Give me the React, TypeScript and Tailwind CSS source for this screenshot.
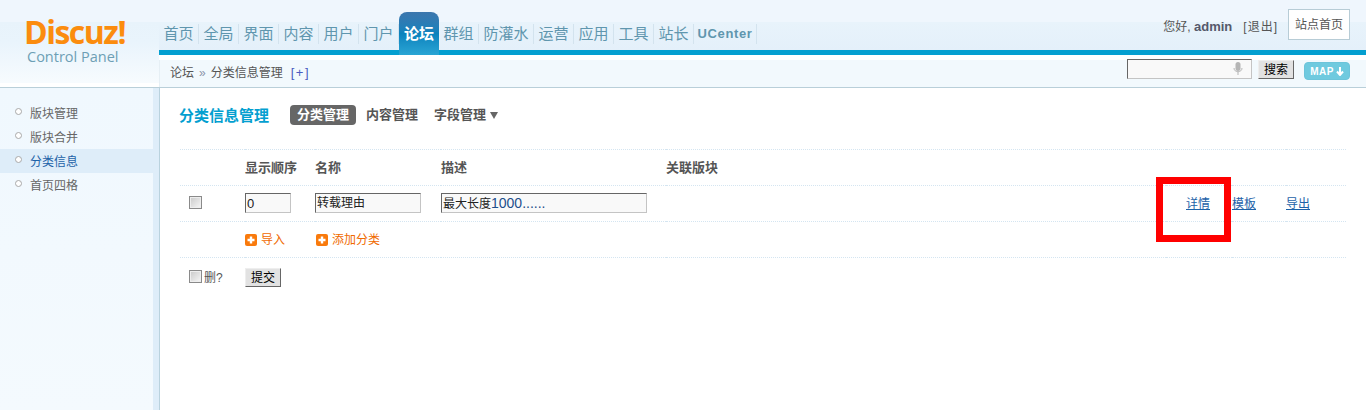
const cjk = "font-['Liberation_Sans','Noto_Sans_CJK_SC',sans-serif]"

const navItems = ["首页", "全局", "界面", "内容", "用户", "门户", "论坛", "群组", "防灌水", "运营", "应用", "工具", "站长", "UCenter"]
const sideItems = ["版块管理", "版块合并", "分类信息", "首页四格"]

const Checkbox = () => (
  <span className="-mt-0.5 -ml-px block h-[13px] w-[13px] border border-[#8a8a8a] bg-gradient-to-br from-[#c9c9c9] to-[#f7f7f7] shadow-[inset_0_0_0_1px_#eee]" />
)

const PlusIcon = () => (
  <svg width="12" height="12" viewBox="0 0 12 12" className="shrink-0">
    <rect width="12" height="12" rx="2" fill="#f97a0c" />
    <path d="M6 2.5v7M2.5 6h7" stroke="#fff" strokeWidth="2.4" />
  </svg>
)

const TextBox = ({ children, className }: { children: React.ReactNode; className: string }) => (
  <div
    className={`-mt-0.5 h-5 border border-t-[#666] border-l-[#666] border-r-[#c4c4c4] border-b-[#c4c4c4] bg-[#f9f9f9] pl-px text-xs leading-[19px] text-[#222] ${className}`}
  >
    {children}
  </div>
)

const Header = () => (
  <header className="flex h-[88px] border-b border-[#b9cfd9] bg-white">
    <div className="h-[83px] w-[159px] bg-[linear-gradient(#eff6fd_0,#eff6fd_22px,#e8f3fb_22px,#e9f4fc_50%,#f7fbfe_100%)] pt-[15px]">
      <div className="pl-6 font-['Open_Sans',sans-serif] text-[32px] leading-[34px] font-bold tracking-[-1.5px] text-[#fb8c0e]">
        Discuz!
      </div>
      <div className="pl-[27px] font-['Open_Sans',sans-serif] text-[14.5px] leading-4 text-[#6d9fb5]">
        Control Panel
      </div>
    </div>
    <div className="flex-1">
      <div className="flex h-[50px] items-end justify-between bg-[linear-gradient(#eff6fd_0,#eff6fd_22px,#e8f3fb_22px,#e4f0fa_100%)]">
        <nav className="flex items-end">
          {navItems.map((item) =>
            item === "论坛" ? (
              <a
                key={item}
                className="relative z-10 -mb-[5px] flex h-[43px] w-10 items-start justify-center rounded-t-lg bg-gradient-to-b from-[#3b76ad] via-[#0a82bd] to-[#2aa5d4] pt-[12px] text-[15px] leading-5 font-bold text-white"
              >
                {item}
              </a>
            ) : (
              <a
                key={item}
                className={`mb-1.5 flex h-5 items-center justify-center border-r border-[#d3e3ee] text-[#5f96ae] ${
                  item === "防灌水"
                    ? "w-[55px] text-[15px]"
                    : item === "UCenter"
                      ? "w-[63px] text-[13px] font-bold tracking-[0.6px]"
                      : "w-10 text-[15px]"
                }`}
              >
                {item}
              </a>
            ),
          )}
        </nav>
        <div className="flex items-start gap-2.5 self-stretch pt-[9px] pr-4 text-xs text-[#555]">
          <span className="pt-[9px]">
            您好, <b className="text-[13px] text-[#55586a]">admin</b>
            <span className="ml-[11px] tracking-[1px]">[退出]</span>
          </span>
          <a className="flex h-[31px] w-[62px] items-center justify-center border border-[#b7ccd6] bg-white text-xs text-[#555]">
            站点首页
          </a>
        </div>
      </div>
      <div className="h-[5px] bg-[#049fd0]" />
      <div className="mt-[5px] flex h-[27px] items-start justify-between border-l border-[#e6eff5] bg-[#f2f9fd] pr-4">
        <div className="flex items-center pt-[5px] pl-[10px] text-xs leading-4 text-[#555]">
          <span>论坛</span>
          <span className="mx-[5px] text-[#8a93a8]">»</span>
          <span>分类信息管理</span>
          <span className="ml-2 text-[13px] tracking-[1.5px] text-[#4a5cc0]">[+]</span>
        </div>
        <div className="-mt-px flex items-start">
          <div className="flex h-5 w-[125px] items-center justify-end border border-t-[#666] border-l-[#666] border-r-[#c4c4c4] border-b-[#c4c4c4] bg-[#f9f9f9] pr-2">
            <svg width="10" height="14" viewBox="0 0 10 14">
              <rect x="2.5" y="0" width="5" height="9" rx="2.5" fill="#b5b5b5" />
              <path d="M1 6c0 5 8 5 8 0M5 10v3" fill="none" stroke="#b5b5b5" />
            </svg>
          </div>
          <button className="mt-px ml-1.5 flex h-[19px] w-9 items-center justify-center border border-t-[#eee] border-l-[#eee] border-r-[#666] border-b-[#666] bg-[#e2e2e2] text-xs text-black">
            搜索
          </button>
          <div className="mt-[3px] ml-[10px] flex h-[18px] w-[46px] items-center justify-center gap-0.5 rounded-[4px] border border-[#6cc4da] bg-[#6fcadf] text-[10px] font-bold tracking-[0.5px] text-white">
            MAP
            <svg width="8" height="9" viewBox="0 0 8 9">
              <path d="M4 0v7M1 4.5 4 8l3-3.5" fill="none" stroke="#fff" strokeWidth="2" />
            </svg>
          </div>
        </div>
      </div>
    </div>
  </header>
)

const Sidebar = () => (
  <aside className="flex w-40 shrink-0 border-r border-[#b9d2de]">
    <ul className="w-[153px] bg-gradient-to-b from-[#f0f8fe] to-[#f4fafe] pt-[13px]">
      {sideItems.map((item) => (
        <li
          key={item}
          className={`flex h-6 items-center gap-2 pl-[15px] text-xs ${item === "分类信息" ? "bg-[#deedf9] text-[#1d62a8]" : "text-[#666]"}`}
        >
          <span className="-mt-1 h-[7px] w-[7px] rounded-full border border-[#a9a9a9] bg-white" />
          <span className="pt-0.5">{item}</span>
        </li>
      ))}
    </ul>
    <div className="flex-1 bg-[#deedf9]" />
  </aside>
)

const cell = "border-b border-dotted border-[#d4e5f1] align-middle"

const Main = () => (
  <main className="relative flex-1 pt-[17px] pr-5 pl-5">
    <div className="flex h-5 items-center">
      <h1 className="-ml-px w-[111px] pt-0.5 text-[15px] font-bold text-[#049fd0]">分类信息管理</h1>
      <a className="flex h-5 w-[66px] items-center justify-center rounded-[4px] bg-[#666] text-[13px] font-bold text-white">
        分类管理
      </a>
      <a className="ml-[10px] text-[13px] font-bold text-[#555]">内容管理</a>
      <a className="ml-4 flex items-center gap-1 text-[13px] font-bold text-[#555]">
        字段管理
        <span className="mt-px border-x-[4px] border-t-[7px] border-x-transparent border-t-[#666]" />
      </a>
    </div>
    <table className="mt-6 w-full table-fixed border-t border-dotted border-[#d4e5f1]">
      <colgroup>
        <col className="w-[65px]" />
        <col className="w-[70px]" />
        <col className="w-[126px]" />
        <col className="w-[225px]" />
        <col />
        <col className="w-[66px]" />
        <col className="w-[54px]" />
        <col className="w-[60px]" />
      </colgroup>
      <tbody>
        <tr className="h-9 text-left text-[13px] text-[#555]">
          <td className={cell} />
          <th className={cell}>显示顺序</th>
          <th className={cell}>名称</th>
          <th className={cell}>描述</th>
          <th className={cell}>关联版块</th>
          <th className={cell} colSpan={3} />
        </tr>
        <tr className="h-9">
          <td className={`${cell} pl-[10px]`}>
            <Checkbox />
          </td>
          <td className={cell}>
            <TextBox className="w-[46px] pl-0.5 text-[13px] text-[#1d62a8]">0</TextBox>
          </td>
          <td className={cell}>
            <TextBox className="w-[106px]">转载理由</TextBox>
          </td>
          <td className={cell}>
            <TextBox className="w-[206px]">
              最大长度<span className="text-[14px] text-[#1d4f8c]">1000......</span>
            </TextBox>
          </td>
          <td className={cell} />
          <td className={`${cell} pl-5 text-xs text-[#1d62a8] underline`}>详情</td>
          <td className={`${cell} text-xs text-[#1d62a8] underline`}>模板</td>
          <td className={`${cell} text-xs text-[#1d62a8] underline`}>导出</td>
        </tr>
        <tr className="h-9 text-xs text-[#f06a00]">
          <td className={cell} />
          <td className={cell}>
            <span className="flex items-center gap-1 pt-px">
              <PlusIcon />
              导入
            </span>
          </td>
          <td className={cell} colSpan={2}>
            <span className="ml-px flex items-center gap-1 pt-px">
              <PlusIcon />
              添加分类
            </span>
          </td>
          <td className={cell} colSpan={4} />
        </tr>
        <tr className="h-10 text-xs text-[#555]">
          <td className="pl-[10px] align-middle">
            <span className="flex items-center gap-0.5">
              <Checkbox />
              删?
            </span>
          </td>
          <td colSpan={7} className="align-middle">
            <button className="flex h-[19px] w-9 items-center justify-center border border-t-[#eee] border-l-[#eee] border-r-[#666] border-b-[#666] bg-[#e2e2e2] text-xs text-black">
              提交
            </button>
          </td>
        </tr>
      </tbody>
    </table>
    <div className="absolute top-[89px] left-[996px] h-[65px] w-[75px] border-[7px] border-[#ff0000]" />
  </main>
)

export default function App() {
  return (
    <div className={`flex h-[410px] w-[1366px] flex-col overflow-hidden bg-white ${cjk}`}>
      <Header />
      <div className="flex flex-1">
        <Sidebar />
        <Main />
      </div>
    </div>
  )
}
